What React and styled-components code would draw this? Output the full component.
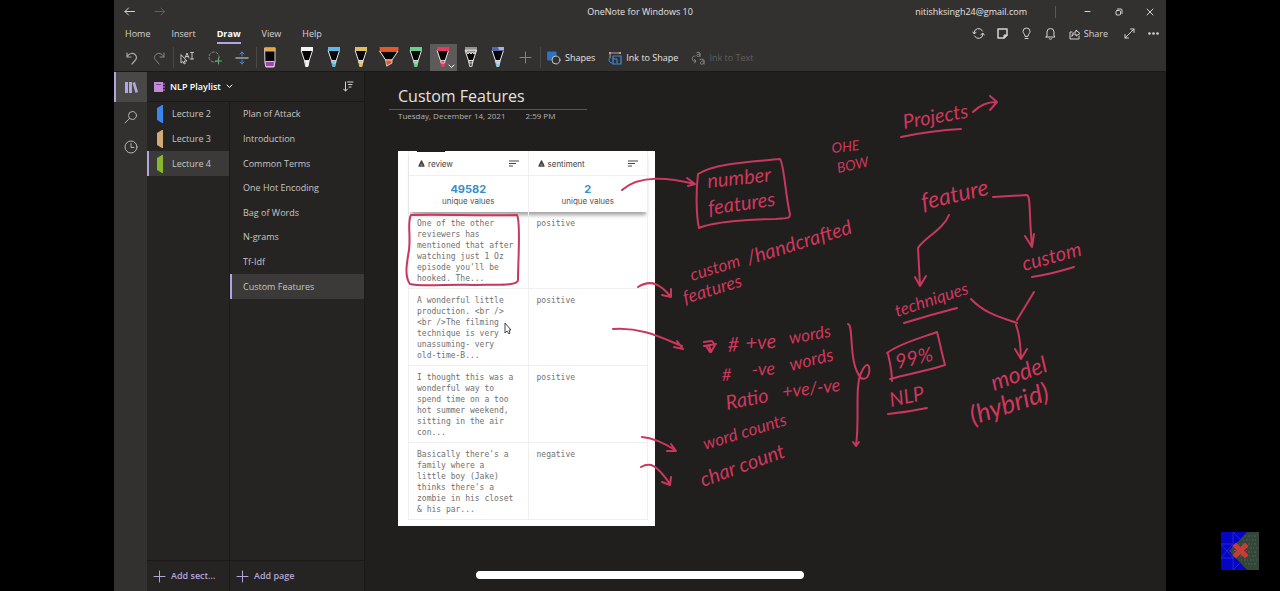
import React from "react";
import styled, { createGlobalStyle } from "styled-components";

const GlobalStyle = createGlobalStyle`
  *, *::before, *::after { box-sizing: border-box; }
  body { margin: 0; background: #000; }
  button { font: inherit; color: inherit; background: none; border: 0; padding: 0; cursor: pointer; }
  svg { display: block; flex: none; }
`;

const Stage = styled.div`
  position: relative;
  min-height: 100vh;
  display: flex;
  padding: 0 114px;
  background: #000;
  color: #d6d4d2;
  font: 9px/12px "Open Sans", "Noto Sans", sans-serif;
`;

const AppWindow = styled.div`
  flex: 1;
  min-width: 0;
  display: flex;
  flex-direction: column;
  background: #201f1e;
`;

const Header = styled.header`
  background: #333130;
  border-bottom: 1px solid #1b1a19;
`;

const TitleBar = styled.div`
  display: grid;
  grid-template-columns: 1fr auto 1fr;
  align-items: center;
  height: 23px;
`;

const HistoryNav = styled.nav`
  display: flex;
  gap: 19px;
  padding-left: 10px;
`;

const AppTitle = styled.h1`
  margin: 0;
  font: inherit;
  color: #e4e2e0;
`;

const WindowControls = styled.div`
  display: flex;
  align-items: center;
  justify-content: flex-end;
  padding-right: 1px;
`;

const Account = styled.span`
  padding-right: 28px;
  color: #e4e2e0;
`;

const ControlGroup = styled.div`
  display: grid;
  grid-template-columns: repeat(3, 31px);
  height: 12px;
  padding-left: 16px;
  border-left: 1px solid #5b5957;
`;

const IconButton = styled.button`
  display: flex;
  align-items: center;
  justify-content: center;
  color: ${(p) => p.$color || "#d6d4d2"};
`;

const MenuBar = styled.div`
  display: flex;
  justify-content: space-between;
  align-items: center;
  height: 21px;
  padding: 0 6px 0 11px;
`;

const Menu = styled.nav`
  display: flex;
  gap: 21px;
`;

const MenuItem = styled.button`
  height: 20px;
  line-height: 19px;
  color: ${(p) => (p.$active ? "#fff" : "#d6d4d2")};
  font-weight: ${(p) => (p.$active ? 700 : 400)};
  border-bottom: 2px solid ${(p) => (p.$active ? "#b3a6e0" : "transparent")};
`;

const Actions = styled.div`
  display: flex;
  align-items: center;
  gap: 11px;
`;

const ShareButton = styled(IconButton)`
  gap: 3px;
  margin: 0 4px 0 1px;
`;

const Toolbar = styled.div`
  display: flex;
  align-items: stretch;
  height: 27px;
  padding-left: 4px;
`;

const ToolGroup = styled.div`
  display: grid;
  grid-template-columns: repeat(${(p) => p.$count}, 1fr);
  width: ${(p) => p.$width}px;
  margin-right: ${(p) => p.$after || 0}px;
`;

const Tool = styled(IconButton)`
  position: relative;
  background: ${(p) => (p.$selected ? "#5d5b59" : "none")};
  &::before {
    content: "";
    position: absolute;
    left: 0;
    top: 3px;
    bottom: 3px;
    border-left: 1px solid ${(p) => (p.$divided ? "#4b4947" : "transparent")};
  }
`;

const PenChevron = styled.span`
  position: absolute;
  right: 2px;
  bottom: 2px;
  color: #fff;
`;

const InkCommands = styled.div`
  display: flex;
  align-items: center;
  gap: 13px;
  margin: 3px 0;
  padding-left: 6px;
  border-left: 1px solid #4b4947;
`;

const Command = styled.button`
  display: flex;
  align-items: center;
  gap: 4px;
  color: #e4e2e0;
  &:disabled { color: #605e5c; }
`;

const Workspace = styled.div`
  flex: 1;
  display: flex;
`;

const Rail = styled.nav`
  width: 33px;
  background: #333130;
`;

const RailButton = styled(IconButton)`
  width: 33px;
  height: 30px;
  padding-right: 2px;
  background: ${(p) => (p.$active ? "#4a4846" : "none")};
  border-left: 2px solid ${(p) => (p.$active ? "#b3a6e0" : "transparent")};
`;

const Sidebar = styled.aside`
  width: 218px;
  display: flex;
  flex-direction: column;
  background: #252423;
  border-right: 1px solid #1b1a19;
`;

const NotebookBar = styled.div`
  display: flex;
  justify-content: space-between;
  align-items: center;
  height: 30px;
  padding: 0 10px 0 7px;
  border-bottom: 1px solid #1b1a19;
`;

const NotebookButton = styled.button`
  display: flex;
  align-items: center;
  gap: 5px;
  color: #fff;
  font-weight: 600;
`;

const Columns = styled.div`
  flex: 1;
  display: grid;
  grid-template-columns: 83px 1fr;
`;

const Column = styled.div`
  display: flex;
  flex-direction: column;
  justify-content: space-between;
  border-right: ${(p) => (p.$ruled ? "1px solid #1b1a19" : "0")};
`;

const List = styled.div`
  display: grid;
  grid-auto-rows: 1fr;
  height: ${(p) => p.$height}px;
`;

const ListItem = styled.button`
  display: flex;
  align-items: center;
  gap: 9px;
  padding-left: ${(p) => p.$inset}px;
  text-align: left;
  color: #c8c6c4;
  background: ${(p) => (p.$active ? "#3b3a39" : "none")};
  border-left: 2px solid ${(p) => (p.$active ? "#b3a6e0" : "transparent")};
`;

const AddButton = styled.button`
  display: flex;
  align-items: center;
  gap: 5px;
  height: 31px;
  padding-left: 6px;
  color: #b3a6d6;
  font-weight: 600;
  border-top: 1px solid #1b1a19;
`;

const Canvas = styled.main`
  position: relative;
  flex: 1;
  min-width: 0;
  padding: 13px 0 0 24px;
`;

const PageTitle = styled.h2`
  width: 198px;
  margin: 0;
  padding: 0 0 2px 9px;
  font: 400 16px/22px "Open Sans", "Noto Sans", sans-serif;
  color: #e4e2e0;
  border-bottom: 1px solid #5b5957;
`;

const PageDate = styled.div`
  display: flex;
  gap: 20px;
  padding-left: 9px;
  font-size: 8px;
  color: #b4b2b0;
`;

const Card = styled.div`
  width: 257px;
  margin: 29px 0 0 9px;
  padding: 0 7px 6px 10px;
  background: #fff;
`;

const Table = styled.table`
  width: 100%;
  table-layout: fixed;
  border-collapse: separate;
  border-spacing: 0;
  border-left: 1px solid #efefef;
  color: #707070;
  thead { box-shadow: 0 5px 4px -2px #a0a0a0; }
`;

const HeadCell = styled.th`
  height: 25px;
  padding: 1px 9px 0;
  border-right: 1px solid #efefef;
  border-bottom: 1px solid #efefef;
  font: 400 8px/12px Inter, sans-serif;
  color: #444;
`;

const HeadContent = styled.div`
  display: flex;
  align-items: center;
  gap: 3px;
  svg:last-child { margin-left: auto; }
`;

const SummaryCell = styled.th`
  height: 36px;
  padding: 2px 0 0;
  border-right: 1px solid #efefef;
  font: 400 8px/12px Inter, sans-serif;
  color: #555;
  strong {
    display: block;
    font-size: 11px;
    font-weight: 700;
    color: #368fca;
  }
`;

const Cell = styled.td`
  height: 77px;
  padding: 6px 0 4px 8px;
  vertical-align: top;
  white-space: pre-line;
  border-right: 1px solid #efefef;
  border-bottom: 1px solid #efefef;
  font: 8px/11px "DejaVu Sans Mono", "Liberation Mono", monospace;
`;

const InkLayer = styled.svg`
  position: absolute;
  left: 0;
  top: 0;
  pointer-events: none;
`;

const Stroke = styled.path`
  fill: none;
  stroke: #c8375c;
  stroke-width: 2px;
  stroke-linecap: round;
  stroke-linejoin: round;
`;

const InkText = styled.text`
  fill: #d2365c;
  font-family: Lato, "Open Sans", sans-serif;
  font-style: italic;
  font-size: ${(p) => p.$size}px;
`;

const HomeIndicator = styled.div`
  position: absolute;
  left: 50%;
  bottom: 12px;
  width: 328px;
  height: 8px;
  margin-left: -164px;
  border-radius: 4px;
  background: #fff;
`;

const Watermark = styled.div`
  position: absolute;
  right: 21px;
  bottom: 21px;
`;

const Icon = ({ size = 14, width, height, children, ...rest }) => (
  <svg width={width || size} height={height || size} viewBox={`0 0 ${width || size} ${height || size}`}
    fill="none" stroke="currentColor" strokeLinecap="round" strokeLinejoin="round" aria-hidden="true" {...rest}>
    {children}
  </svg>
);

const Arrow = ({ flip }) => (
  <Icon width={11} height={9}>
    <path d={flip ? "M1 4.500H10.500M7 1l3.500 3.500L7 8" : "M10.500 4.500H1M4.500 1L1 4.500 4.500 8"} />
  </Icon>
);

const Chevron = () => <Icon width={7} height={5}><path d="M1 1l2.500 2.500L6 1" /></Icon>;

const Plus = ({ size = 13 }) => (
  <Icon size={size}><path d={`M${size / 2} 1V${size - 1}M1 ${size / 2}H${size - 1}`} /></Icon>
);

const Pen = ({ color, wide, pencil, galaxy }) => (
  <Icon width={22} height={23} stroke="#e8e6e4">
    {wide ? (
      <>
        <path d="M2 5h18l-6 9H8z" fill="#050505" />
        <path d="M1.500 1h19v2.500L20 5H2z" fill={color} stroke="none" />
        <path d="M8 14h6v3l-5 3z" fill={color} strokeWidth=".8" />
      </>
    ) : (
      <>
        <path d="M5.500 4.500h11L13 15H9z" fill="#050505" />
        <path d="M5 1h12v4H5z" fill={galaxy ? "#5366a8" : color} stroke="none" />
        {galaxy && <path d="M11 1h6v3h-5z" fill="#b8a9dd" stroke="none" />}
        {pencil && <path d="M5.500 4.500L8 8l1.500-2L11 8l1.500-2L14 8l2.500-3.500z" fill="#93918f" />}
        <path d="M9 14.500h4l-1 6h-2z" fill={pencil ? "#555" : color} stroke={pencil ? "#ccc" : color} />
        <path d="M9 14.500h4l-.4 2.500h-3.200z" stroke="#e8e6e4" strokeWidth=".8" />
      </>
    )}
  </Icon>
);

const PENS = [
  { name: "White pen", color: "#f4f4f4" },
  { name: "Blue pen", color: "#5fb8e6" },
  { name: "Gold pen", color: "#dfbd62" },
  { name: "Orange highlighter", color: "#e8572c", wide: true },
  { name: "Green pen", color: "#67d08d" },
  { name: "Red pen", color: "#e93861", selected: true },
  { name: "Pencil", color: "#93918f", pencil: true },
  { name: "Galaxy pen", color: "#9fcbe6", galaxy: true },
];

const SECTIONS = [
  { name: "Lecture 2", color: "#3b86ea" },
  { name: "Lecture 3", color: "#d0ab75" },
  { name: "Lecture 4", color: "#86b92f", active: true },
];

const PAGES = ["Plan of Attack", "Introduction", "Common Terms", "One Hot Encoding",
  "Bag of Words", "N-grams", "Tf-Idf", "Custom Features"];

const REVIEWS = [
  ["One of the other\nreviewers has\nmentioned that after\nwatching just 1 Oz\nepisode you'll be\nhooked. The...", "positive"],
  ["A wonderful little\nproduction. <br />\n<br />The filming\ntechnique is very\nunassuming- very\nold-time-B...", "positive"],
  ["I thought this was a\nwonderful way to\nspend time on a too\nhot summer weekend,\nsitting in the air\ncon...", "positive"],
  ["Basically there's a\nfamily where a\nlittle boy (Jake)\nthinks there's a\nzombie in his closet\n& his par...", "negative"],
];

// Handwritten notes: text, x, baseline y, angle, size
const NOTES = [
  ["Projects", 904, 129, -10, 20],
  ["number", 708, 188, -6, 20],
  ["features", 709, 215, -8, 20],
  ["OHE", 832, 153, -6, 14],
  ["BOW", 838, 173, -12, 14],
  ["custom", 692, 281, -17, 17],
  ["/handcrafted", 749, 265, -17, 20],
  ["features", 685, 304, -17, 18],
  ["feature", 923, 210, -13, 23],
  ["custom", 1024, 271, -15, 20],
  ["techniques", 897, 317, -18, 17],
  ["#", 728, 352, -4, 20],
  ["+ve", 746, 350, -4, 20],
  ["words", 790, 344, -10, 17],
  ["#", 722, 381, -4, 17],
  ["-ve", 752, 376, -4, 18],
  ["words", 791, 371, -14, 18],
  ["Ratio", 727, 410, -11, 20],
  ["+ve/-ve", 783, 398, -7, 18],
  ["word counts", 705, 450, -17, 17],
  ["char count", 703, 487, -20, 20],
  ["99%", 897, 369, -13, 20],
  ["NLP", 891, 407, -12, 20],
  ["model", 994, 391, -20, 23],
  ["(hybrid)", 973, 425, -18, 26],
];

const STROKES = [
  "M901 137C920 133 940 130 961 129M973 112C980 105 988 102 996 102M990 96L997 102 990 110",
  "M622 190C640 174 670 178 695 184M687 178L695 184 688 186",
  "M698 174C715 163 750 162 780 159C784 163 786 200 790 214C790 219 788 218 776 219C750 219 712 222 699 228C696 215 696 190 698 174Z",
  "M411 215C440 214 480 216 517 215C521 222 518 260 518 280C518 287 490 284 475 285C450 284 420 287 410 284C404 276 407 262 409 250C411 235 407 222 411 215Z",
  "M638 287C652 278 662 286 671 297M671 289V297L662 295",
  "M613 329C642 327 662 338 682 346M677 341L683 349 674 347",
  "M642 437C654 438 664 443 675 450M671 444L676 451 667 451",
  "M641 467C650 462 656 464 670 484M671 477L670 485 662 482",
  "M704 342L711 341M706 346L710 352M704 346L716 344M712 341L715 345 711 352 709 345",
  "M848 324C854 325 848 364 861 378C873 384 871 352 862 371C854 385 860 418 856 446M853 442L856 446 859 442",
  "M949 215C943 230 925 237 918 248L920 285M915 277L920 286 926 276",
  "M993 197L1027 195C1031 196 1029 220 1032 245M1025 236L1032 247 1034 234",
  "M1032 277Q1052 274 1074 267M904 323Q930 315 957 308",
  "M971 299C984 313 1000 317 1017 323M1034 292L1017 320M1016 325C1021 338 1020 346 1021 359M1015 349L1021 359 1027 349",
  "M887 353C900 343 924 337 937 332C940 343 942 354 945 365C927 371 907 374 890 379M888 354C890 363 892 370 892 381",
  "M888 414Q908 412 927 408",
];

const TypeIcon = () => <Icon size={7} strokeWidth="1.500"><path d="M1 6h5M1.500 5L3.500 1l2 4M2.500 4h2" /></Icon>;
const FilterIcon = () => <Icon width={10} height={7} strokeLinecap="butt"><path d="M0 1h10M0 3.500h7M0 6h4" /></Icon>;

export default function App() {
  return (
    <Stage>
      <GlobalStyle />
      <AppWindow>
        <Header>
          <TitleBar>
            <HistoryNav>
              <IconButton aria-label="Back"><Arrow /></IconButton>
              <IconButton aria-label="Forward" $color="#605e5c"><Arrow flip /></IconButton>
            </HistoryNav>
            <AppTitle>OneNote for Windows 10</AppTitle>
            <WindowControls>
              <Account>nitishksingh24@gmail.com</Account>
              <ControlGroup>
                <IconButton aria-label="Minimize"><Icon size={7}><path d="M1 3.500h5" /></Icon></IconButton>
                <IconButton aria-label="Restore"><Icon size={8}><rect x="1" y="2.500" width="4.500" height="4.500" rx="1" /><path d="M2.500 1H6a1 1 0 011 1v3.500" /></Icon></IconButton>
                <IconButton aria-label="Close"><Icon size={8}><path d="M1 1l6 6M7 1L1 7" /></Icon></IconButton>
              </ControlGroup>
            </WindowControls>
          </TitleBar>
          <MenuBar>
            <Menu>
              {["Home", "Insert", "Draw", "View", "Help"].map((m) => (
                <MenuItem key={m} $active={m === "Draw"}>{m}</MenuItem>
              ))}
            </Menu>
            <Actions>
              <IconButton aria-label="Sync"><Icon size={13}><path d="M2 6a4.500 4.500 0 018.500-2M11 7a4.500 4.500 0 01-8.500 2M.8 5L2 6.800 4 5.500M12.200 8L11 6.200 9 7.500" /></Icon></IconButton>
              <IconButton aria-label="Sticky notes"><Icon size={13}><path d="M2 2h9v6l-3 3H2z" strokeWidth="1.500" /><path d="M8 11V8h3z" fill="currentColor" /></Icon></IconButton>
              <IconButton aria-label="Tips"><Icon size={13}><path d="M5 9C5 7 3 6.500 3 4.500a3.500 3.500 0 017 0C10 6.500 8 7 8 9zM5 11.500h3" /></Icon></IconButton>
              <IconButton aria-label="Notifications"><Icon size={13}><path d="M3 9V5a3.500 3.500 0 017 0v4l1 1H2zM5 11.500c1 1 2 1 3 0" /></Icon></IconButton>
              <ShareButton><Icon width={12} height={12}><path d="M3 4H1v7h9V8M3 8c0-3 2-4 4-4V2l4 3.500L7 8V6C5 6 4 6.500 3 8z" /></Icon>Share</ShareButton>
              <IconButton aria-label="Full screen"><Icon size={13}><path d="M2 11l9-9M7.500 2H11v3.500M2 7.500V11h3.500" /></Icon></IconButton>
              <IconButton aria-label="More"><Icon size={13} fill="currentColor" stroke="none"><circle cx="2.500" cy="6.500" r="1.300" /><circle cx="6.500" cy="6.500" r="1.300" /><circle cx="10.500" cy="6.500" r="1.300" /></Icon></IconButton>
            </Actions>
          </MenuBar>
          <Toolbar>
            <ToolGroup $count={6} $width={166} $after={9}>
              <Tool aria-label="Undo" $color="#a8a6a4"><Icon><path d="M2 2v4h4M2 6c2-4 6-4.500 8-2.500s2 4 0 6L7 13" strokeWidth="1.200" /></Icon></Tool>
              <Tool aria-label="Redo" $color="#8a8886"><Icon><path d="M12 2v4H8M12 6c-2-4-6-4.500-8-2.500s-2 4 0 6L7 13" /></Icon></Tool>
              <Tool aria-label="Select objects or type text" $divided><Icon><path d="M1 4v8l2-1.500 1.200 2.500 1.200-.6L4.200 10H6.500zM5 7l2-5 2 5M6 5.500h2M10.500 1.500h3M10.500 8h3M12 1.500V8" strokeWidth=".9" /></Icon></Tool>
              <Tool aria-label="Lasso select" $color="#8a8886"><Icon><circle cx="6" cy="6" r="5" strokeDasharray="2.200 2" /><path d="M10.500 7v6M7.500 10h6" stroke="#62b36c" /></Icon></Tool>
              <Tool aria-label="Insert space"><Icon><path d="M1 7h12" strokeWidth="1.500" stroke="#9ba5ae" /><path d="M7 5V1M5 3l2-2 2 2M7 9v4M5 11l2 2 2-2" stroke="#3f8ad6" /></Icon></Tool>
              <Tool aria-label="Eraser" $divided>
                <Icon width={12} height={22}><path d="M1 1h10v14l-1 5H2l-1-5z" fill="#050505" stroke="#d8d6d4" /><path d="M.5.500h11v4H.5z" fill="#e2a84b" stroke="none" /><path d="M1.500 14.500h9l-.5 5H2z" fill="#9b49a8" stroke="#e1b4e6" /></Icon>
              </Tool>
            </ToolGroup>
            <ToolGroup $count={9} $width={246} $after={1}>
              {PENS.map((pen) => (
                <Tool key={pen.name} aria-label={pen.name} $selected={pen.selected}>
                  <Pen {...pen} />
                  {pen.selected && <PenChevron><Chevron /></PenChevron>}
                </Tool>
              ))}
              <Tool aria-label="Add pen" $color="#5f9e62"><Plus /></Tool>
            </ToolGroup>
            <InkCommands>
              <Command>
                <Icon><path d="M1 1h8v3L5 9H1z" fill="#2f72c4" stroke="#2f72c4" /><circle cx="9" cy="9" r="4" fill="#333130" stroke="#c8c6c4" /></Icon>
                Shapes
              </Command>
              <Command>
                <Icon><path d="M2 3v4M3 2h8" stroke="#b9a0a0" /><path d="M1 1h2v2H1zM11 1h2v2h-2z" fill="#c49a9a" stroke="none" /><path d="M5 5h8v8H5z" stroke="#3f8ad6" strokeWidth="1.200" /><path d="M1 8c0 3 1 4 3 4M5 8h4v4" stroke="#3f8ad6" /></Icon>
                Ink to Shape
              </Command>
              <Command disabled>
                <Icon stroke="#8a8886"><path d="M6 1.500c2-1 3 0 3 1.500v2.500M9 3C6 3 5.500 4 6 5s2 .5 3-.5M4 5C1 5 .5 8 2.500 10H4M3.500 8.500L5 10l-1.500 2M9 8.500c3-1 4 0 4 1.500v3M13 10c-3 0-4 1-3.500 2.500s2.500.5 3.500-.5" /></Icon>
                Ink to Text
              </Command>
            </InkCommands>
          </Toolbar>
        </Header>
        <Workspace>
          <Rail>
            <RailButton aria-label="Notebooks" $active $color="#b3a6e0"><Icon fill="currentColor" stroke="none"><path d="M1 2h3v11H1zM5 2h3v11H5zM8.500 3L11 2l3 10-2.500 1z" /></Icon></RailButton>
            <RailButton aria-label="Search" $color="#b8b6b4"><Icon><circle cx="8.500" cy="5.500" r="4" /><path d="M5.500 8.500L1 13" /></Icon></RailButton>
            <RailButton aria-label="Recent notes" $color="#b8b6b4"><Icon><circle cx="7" cy="7" r="6" /><path d="M7 3.500V7.500h3" /></Icon></RailButton>
          </Rail>
          <Sidebar>
            <NotebookBar>
              <NotebookButton>
                <Icon width={11} height={12} stroke="none"><path d="M0 1h9v10H0z" fill="#c08ad6" /><path d="M2 3h5v1H2zM9 2h2v2H9zM9 5h2v2H9zM9 8h2v2H9z" fill="#7e4a96" /></Icon>
                NLP Playlist
                <Chevron />
              </NotebookButton>
              <IconButton aria-label="Sort pages"><Icon width={11} height={11}><path d="M2.500 1v9M.5 8l2 2 2-2M4.500 1H10M5.500 3.500H9M6 6h2" /></Icon></IconButton>
            </NotebookBar>
            <Columns>
              <Column $ruled>
                <List $height={74}>
                  {SECTIONS.map((s) => (
                    <ListItem key={s.name} $inset={8} $active={s.active}>
                      <Icon width={6} height={18} stroke="none"><path d="M0 3l5-3h1v18H5l-5-3z" fill={s.color} /></Icon>
                      {s.name}
                    </ListItem>
                  ))}
                </List>
                <AddButton><Plus />Add sect...</AddButton>
              </Column>
              <Column>
                <List $height={197}>
                  {PAGES.map((p) => (
                    <ListItem key={p} $inset={11} $active={p === "Custom Features"}>{p}</ListItem>
                  ))}
                </List>
                <AddButton><Plus />Add page</AddButton>
              </Column>
            </Columns>
          </Sidebar>
          <Canvas>
            <PageTitle>Custom Features</PageTitle>
            <PageDate><span>Tuesday, December 14, 2021</span><span>2:59 PM</span></PageDate>
            <Card>
              <Table>
                <thead>
                  <tr>
                    {["review", "sentiment"].map((h) => (
                      <HeadCell key={h} scope="col"><HeadContent><TypeIcon />{h}<FilterIcon /></HeadContent></HeadCell>
                    ))}
                  </tr>
                  <tr>
                    <SummaryCell><strong>49582</strong>unique values</SummaryCell>
                    <SummaryCell><strong>2</strong>unique values</SummaryCell>
                  </tr>
                </thead>
                <tbody>
                  {REVIEWS.map(([review, sentiment]) => (
                    <tr key={review}><Cell>{review}</Cell><Cell>{sentiment}</Cell></tr>
                  ))}
                </tbody>
              </Table>
            </Card>
            <InkLayer width="801" height="519" viewBox="365 72 801 519">
              {STROKES.map((d) => <Stroke key={d} d={d} />)}
              {NOTES.map(([text, x, y, angle, size]) => (
                <InkText key={`${text}${x}`} $size={size} transform={`translate(${x} ${y}) rotate(${angle})`}>{text}</InkText>
              ))}
              <path d="M417 151h28" stroke="#201f1e" strokeWidth="2" />
              <path d="M505 323v10l2-2 2 3 1-1-1-3h2z" fill="#fff" stroke="#444" />
            </InkLayer>
          </Canvas>
        </Workspace>
      </AppWindow>
      <HomeIndicator />
      <Watermark>
        <svg width="38" height="38" viewBox="0 0 38 38" aria-hidden="true">
          <path d="M0 0h38v38H0z" fill="#0505c4" />
          <path d="M0 12h12v14H0M12 0v38M0 12L12 26M12 12L0 26M12 0l12 12M12 38l10-10" fill="none" stroke="#2424d8" />
          <path d="M26 0h12v38H26L8 19z" fill="#34463a" />
          <path d="M24 4h12M22 8h14M18 12h18M14 16h22M12 20h24M16 24h20M20 28h16M24 32h12" stroke="#4d6354" strokeDasharray="1 2 2 1" />
          <path d="M15 14l9 9M24 14l-9 9" stroke="#c93a38" strokeWidth="5" strokeLinecap="square" />
          <path d="M13 18.500h13" stroke="#c93a38" strokeDasharray="2 2" />
        </svg>
      </Watermark>
    </Stage>
  );
}
